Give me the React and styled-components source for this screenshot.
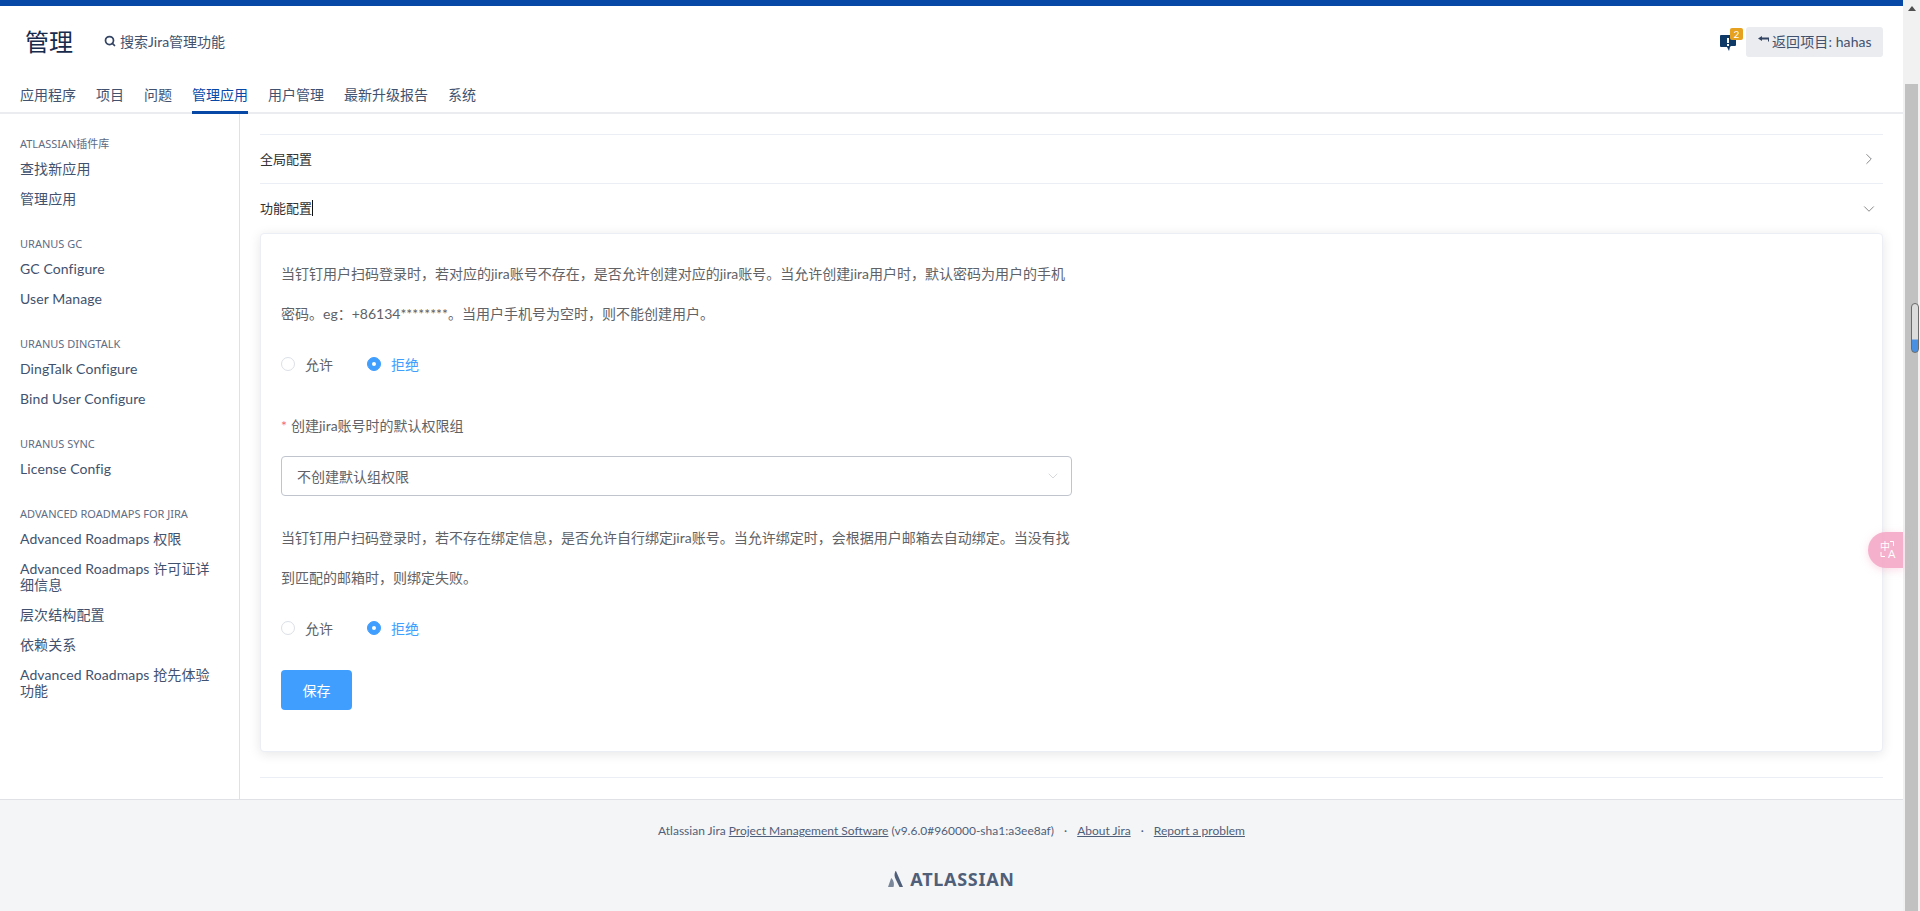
import React from 'react';
import styled, { createGlobalStyle } from 'styled-components';
import { ChevronDown, ChevronRight, Search } from 'lucide-react';

const GlobalStyle = createGlobalStyle`
  html, body {
    margin: 0;
    height: 911px;
    overflow: hidden;
    background: #fff;
    font-family: Lato, "Noto Sans CJK SC", sans-serif;
  }
`;

const Page = styled.div`
  display: flex;
  width: 1920px;
  height: 911px;
  position: relative;
  overflow: hidden;
`;

const Main = styled.div`
  flex: 1;
  min-width: 0;
  display: flex;
  flex-direction: column;
`;

const TopBar = styled.div`
  height: 6px;
  background: #0747a6;
`;

const TitleRow = styled.header`
  height: 72px;
  display: flex;
  align-items: center;
  padding: 0 20px 0 25px;
`;

const Title = styled.h1`
  margin: 0;
  width: 79px;
  font-size: 24px;
  font-weight: 400;
  line-height: 32px;
  color: #172b4d;
`;

const SearchBox = styled.div`
  display: flex;
  align-items: center;
  gap: 4px;
  padding-bottom: 2px;
  font-size: 14px;
  color: #42526e;
`;

const HeaderRight = styled.div`
  margin-left: auto;
  display: flex;
  align-items: center;
  gap: 10px;
`;

const Feedback = styled.div`
  position: relative;
  width: 16px;
  height: 17px;
  margin-top: 3px;
`;

const Badge = styled.span`
  position: absolute;
  left: 10px;
  top: -7px;
  width: 13px;
  height: 12px;
  border-radius: 2px;
  background: #e5a11f;
  color: #fff;
  font-size: 10px;
  line-height: 12px;
  text-align: center;
`;

const BackButton = styled.button`
  height: 30px;
  width: 137px;
  border: 0;
  border-radius: 3px;
  background: #ebecf0;
  color: #42526e;
  font: inherit;
  font-size: 14px;
  letter-spacing: 0.1px;
  padding: 0 0 2px 12px;
  display: flex;
  align-items: center;
  gap: 3px;
`;

const Nav = styled.nav`
  height: 34px;
  border-bottom: 2px solid #ebecf0;
  padding-left: 20px;
  display: flex;
  gap: 20px;
`;

const Tab = styled.a`
  height: 36px;
  box-sizing: border-box;
  padding-top: 9px;
  font-size: 14px;
  line-height: 16px;
  color: ${(p) => (p.$active ? '#0747a6' : '#42526e')};
  border-bottom: 3px solid ${(p) => (p.$active ? '#0747a6' : 'transparent')};
`;

const Body = styled.div`
  flex: 1;
  min-height: 0;
  display: flex;
`;

const Sidebar = styled.aside`
  width: 239px;
  box-sizing: content-box;
  border-right: 1px solid #dfe1e6;
  padding-top: 23px;
`;

const SideGroup = styled.section`
  margin-bottom: 23px;
`;

const SideHeading = styled.h4`
  margin: 0 0 3px;
  padding-left: 20px;
  font-family: "Noto Sans", "Noto Sans CJK SC", sans-serif;
  font-size: 11px;
  font-weight: 400;
  line-height: 14px;
  color: #5e6c84;
  text-transform: uppercase;
`;

const SideItem = styled.a`
  display: block;
  padding: 7px 20px;
  font-size: 14px;
  line-height: 16px;
  letter-spacing: 0.1px;
  color: #42526e;
`;

const Content = styled.main`
  flex: 1;
  min-width: 0;
  padding: 20px 20px 0;
`;

const Collapse = styled.div`
  border-top: 1px solid #ebeef5;
  border-bottom: 1px solid #ebeef5;
`;

const SectionRow = styled.div`
  height: ${(p) => (p.$open ? '49px' : '48px')};
  display: flex;
  align-items: center;
  justify-content: space-between;
  padding-right: 5px;
  font-size: 13px;
  color: #303133;
  border-bottom: ${(p) => (p.$open ? '0' : '1px solid #ebeef5')};
  svg {
    color: #606266;
  }
`;

const SectionName = styled.span`
  display: flex;
  align-items: center;
  padding-bottom: 2px;
`;

const Caret = styled.i`
  display: inline-block;
  width: 1px;
  height: 16px;
  background: #111;
`;

const CardWrap = styled.div`
  padding-bottom: 25px;
`;

const Card = styled.div`
  box-sizing: border-box;
  height: 519px;
  padding: 20px;
  background: #fff;
  border: 1px solid #ebeef5;
  border-radius: 4px;
  box-shadow: 0 2px 12px rgba(0, 0, 0, 0.1);
`;

const Hint = styled.p`
  margin: ${(p) => p.$top || 0} 0 0;
  width: 795px;
  font-size: 14px;
  line-height: 40px;
  color: #606266;
`;

const RadioRow = styled.div`
  margin-top: ${(p) => p.$top};
  height: 20px;
  display: flex;
  align-items: center;
  gap: 30px;
`;

const Radio = styled.label`
  display: flex;
  align-items: center;
  gap: 10px;
  width: 56px;
  font-size: 14px;
  color: ${(p) => (p.$checked ? '#409eff' : '#606266')};
`;

const RadioDot = styled.span`
  box-sizing: border-box;
  width: 14px;
  height: 14px;
  border-radius: 50%;
  border: 1px solid ${(p) => (p.$checked ? '#409eff' : '#dcdfe6')};
  background: ${(p) => (p.$checked ? '#409eff' : '#fff')};
  display: flex;
  align-items: center;
  justify-content: center;
  &::after {
    content: '';
    width: 4px;
    height: 4px;
    border-radius: 50%;
    background: #fff;
  }
`;

const FieldLabel = styled.div`
  margin-top: 42px;
  font-size: 14px;
  line-height: 20px;
  color: #606266;
  span {
    color: #f56c6c;
    margin-right: 4px;
  }
`;

const Select = styled.div`
  box-sizing: border-box;
  margin-top: 20px;
  width: 791px;
  height: 40px;
  padding: 0 10px 0 15px;
  border: 1px solid #c0c4cc;
  border-radius: 4px;
  display: flex;
  align-items: center;
  justify-content: space-between;
  font-size: 14px;
  color: #606266;
  svg {
    color: #c0c4cc;
  }
`;

const SaveButton = styled.button`
  display: block;
  margin-top: 32px;
  width: 71px;
  height: 40px;
  border: 0;
  border-radius: 4px;
  background: #409eff;
  color: #fff;
  font: inherit;
  font-size: 14px;
`;

const Footer = styled.footer`
  height: 112px;
  box-sizing: border-box;
  border-top: 1px solid #dfe1e6;
  background: #f4f5f7;
  padding-top: 23px;
  display: flex;
  flex-direction: column;
  align-items: center;
`;

const FooterLine = styled.div`
  font-size: 12px;
  line-height: 16px;
  color: #505f79;
`;

const FooterLink = styled.a`
  text-decoration: underline;
`;

const FooterDot = styled.span`
  margin: 0 10px;
`;

const Logo = styled.div`
  margin-top: 32px;
  display: flex;
  align-items: center;
  gap: 7px;
  font-family: "Noto Sans", sans-serif;
  font-size: 18px;
  font-weight: 700;
  line-height: 16px;
  letter-spacing: 0.7px;
  color: #505f79;
`;

const Scrollbar = styled.div`
  width: 17px;
  background: #f1f1f1;
  display: flex;
  flex-direction: column;
  align-items: center;
`;

const ScrollArrow = styled.div`
  margin-top: 6px;
  width: 0;
  height: 0;
  border-left: 4px solid transparent;
  border-right: 4px solid transparent;
  border-bottom: 5px solid #505050;
`;

const ScrollThumb = styled.div`
  margin-top: 73px;
  flex: 1;
  width: 13px;
  background: #c1c1c1;
`;

const Marker = styled.div`
  position: absolute;
  left: 1911px;
  top: 303px;
  width: 8px;
  height: 50px;
  box-sizing: border-box;
  border: 1.5px solid #6b6b6b;
  border-radius: 4px;
  background: linear-gradient(#dcdcdc 72%, #4a90e2 76%);
`;

const TranslateTab = styled.div`
  position: absolute;
  left: 1868px;
  top: 532px;
  width: 35px;
  height: 36px;
  border-radius: 18px 0 0 18px;
  background: rgba(244, 167, 197, 0.9);
  box-shadow: 0 2px 8px rgba(244, 167, 197, 0.4);
  color: #fff;
  svg {
    position: absolute;
    left: 12px;
    top: 9px;
  }
`;

const TranslateZh = styled.span`
  position: absolute;
  left: 12px;
  top: 8px;
  font-size: 10px;
  line-height: 12px;
`;

const TranslateEn = styled.span`
  position: absolute;
  left: 20px;
  top: 16px;
  font-size: 11px;
  line-height: 12px;
`;

const sidebar = [
  { title: 'Atlassian插件库', items: ['查找新应用', '管理应用'] },
  { title: 'Uranus GC', items: ['GC Configure', 'User Manage'] },
  { title: 'Uranus DingTalk', items: ['DingTalk Configure', 'Bind User Configure'] },
  { title: 'Uranus Sync', items: ['License Config'] },
  {
    title: 'Advanced Roadmaps for Jira',
    items: [
      'Advanced Roadmaps 权限',
      'Advanced Roadmaps 许可证详细信息',
      '层次结构配置',
      '依赖关系',
      'Advanced Roadmaps 抢先体验功能',
    ],
  },
];

const tabs = ['应用程序', '项目', '问题', '管理应用', '用户管理', '最新升级报告', '系统'];

const FeedbackIcon = () => (
  <svg width="16" height="17" viewBox="0 0 16 17">
    <path d="M1 0h14a1 1 0 0 1 1 1v9a1 1 0 0 1-1 1h-4l-1 1-1 4-2-4H1a1 1 0 0 1-1-1V1a1 1 0 0 1 1-1z" fill="#0f3a68" />
    <rect x="7" y="3" width="2" height="5" fill="#fff" />
    <rect x="7" y="9" width="2" height="2" fill="#fff" />
  </svg>
);

const BackIcon = () => (
  <svg width="11" height="7" viewBox="0 0 11 7" style={{ marginTop: -4 }}>
    <path d="M4 0 0 2.500 4 5V3.500h6v2h1V1.500H4z" fill="#344563" />
  </svg>
);

const AtlassianMark = () => (
  <svg width="15" height="16" viewBox="0 0 15 16">
    <path d="M7.500 0C6 3 6.300 5.500 7.800 8.500L11.500 16H15L8.200 .400C8 0 7.700 0 7.500 0z" fill="#505f79" />
    <path d="M3.800 7.500c-.3-.4-.6-.3-.8.100L0 16h5.500c.9-2.500.500-5.800-1.700-8.500z" fill="#7a869a" />
  </svg>
);

const TranslateCorners = () => (
  <svg width="16" height="18" viewBox="0 0 16 18" fill="none" stroke="#fff" strokeWidth="1">
    <path d="M10 .5h3.500V5" />
    <path d="M1 11v4.500h4" />
  </svg>
);

const RadioGroup = ({ top }) => (
  <RadioRow $top={top}>
    <Radio>
      <RadioDot />
      允许
    </Radio>
    <Radio $checked>
      <RadioDot $checked />
      拒绝
    </Radio>
  </RadioRow>
);

export default function App() {
  return (
    <Page>
      <GlobalStyle />
      <Main>
        <TopBar />
        <TitleRow>
          <Title>管理</Title>
          <SearchBox>
            <Search size={12} strokeWidth={3.5} color="#344563" />
            搜索Jira管理功能
          </SearchBox>
          <HeaderRight>
            <Feedback>
              <FeedbackIcon />
              <Badge>2</Badge>
            </Feedback>
            <BackButton>
              <BackIcon />
              返回项目: hahas
            </BackButton>
          </HeaderRight>
        </TitleRow>
        <Nav>
          {tabs.map((t) => (
            <Tab key={t} $active={t === '管理应用'}>
              {t}
            </Tab>
          ))}
        </Nav>
        <Body>
          <Sidebar>
            {sidebar.map((g) => (
              <SideGroup key={g.title}>
                <SideHeading>{g.title}</SideHeading>
                {g.items.map((i) => (
                  <SideItem key={i}>{i}</SideItem>
                ))}
              </SideGroup>
            ))}
          </Sidebar>
          <Content>
            <Collapse>
              <SectionRow>
                <SectionName>全局配置</SectionName>
                <ChevronRight size={18} strokeWidth={1} />
              </SectionRow>
              <SectionRow $open>
                <SectionName>
                  功能配置
                  <Caret />
                </SectionName>
                <ChevronDown size={18} strokeWidth={1} />
              </SectionRow>
              <CardWrap>
                <Card>
                  <Hint>
                    当钉钉用户扫码登录时，若对应的jira账号不存在，是否允许创建对应的jira账号。当允许创建jira用户时，默认密码为用户的手机密码。eg：+86134********。当用户手机号为空时，则不能创建用户。
                  </Hint>
                  <RadioGroup top="20px" />
                  <FieldLabel>
                    <span>*</span>创建jira账号时的默认权限组
                  </FieldLabel>
                  <Select>
                    不创建默认组权限
                    <ChevronDown size={16} strokeWidth={1} />
                  </Select>
                  <Hint $top="22px">
                    当钉钉用户扫码登录时，若不存在绑定信息，是否允许自行绑定jira账号。当允许绑定时，会根据用户邮箱去自动绑定。当没有找到匹配的邮箱时，则绑定失败。
                  </Hint>
                  <RadioGroup top="20px" />
                  <SaveButton>保存</SaveButton>
                </Card>
              </CardWrap>
            </Collapse>
          </Content>
        </Body>
        <Footer>
          <FooterLine>
            Atlassian Jira <FooterLink>Project Management Software</FooterLink> (v9.6.0#960000-sha1:a3ee8af)
            <FooterDot>·</FooterDot>
            <FooterLink>About Jira</FooterLink>
            <FooterDot>·</FooterDot>
            <FooterLink>Report a problem</FooterLink>
          </FooterLine>
          <Logo>
            <AtlassianMark />
            ATLASSIAN
          </Logo>
        </Footer>
      </Main>
      <Scrollbar>
        <ScrollArrow />
        <ScrollThumb />
      </Scrollbar>
      <Marker />
      <TranslateTab>
        <TranslateCorners />
        <TranslateZh>中</TranslateZh>
        <TranslateEn>A</TranslateEn>
      </TranslateTab>
    </Page>
  );
}
